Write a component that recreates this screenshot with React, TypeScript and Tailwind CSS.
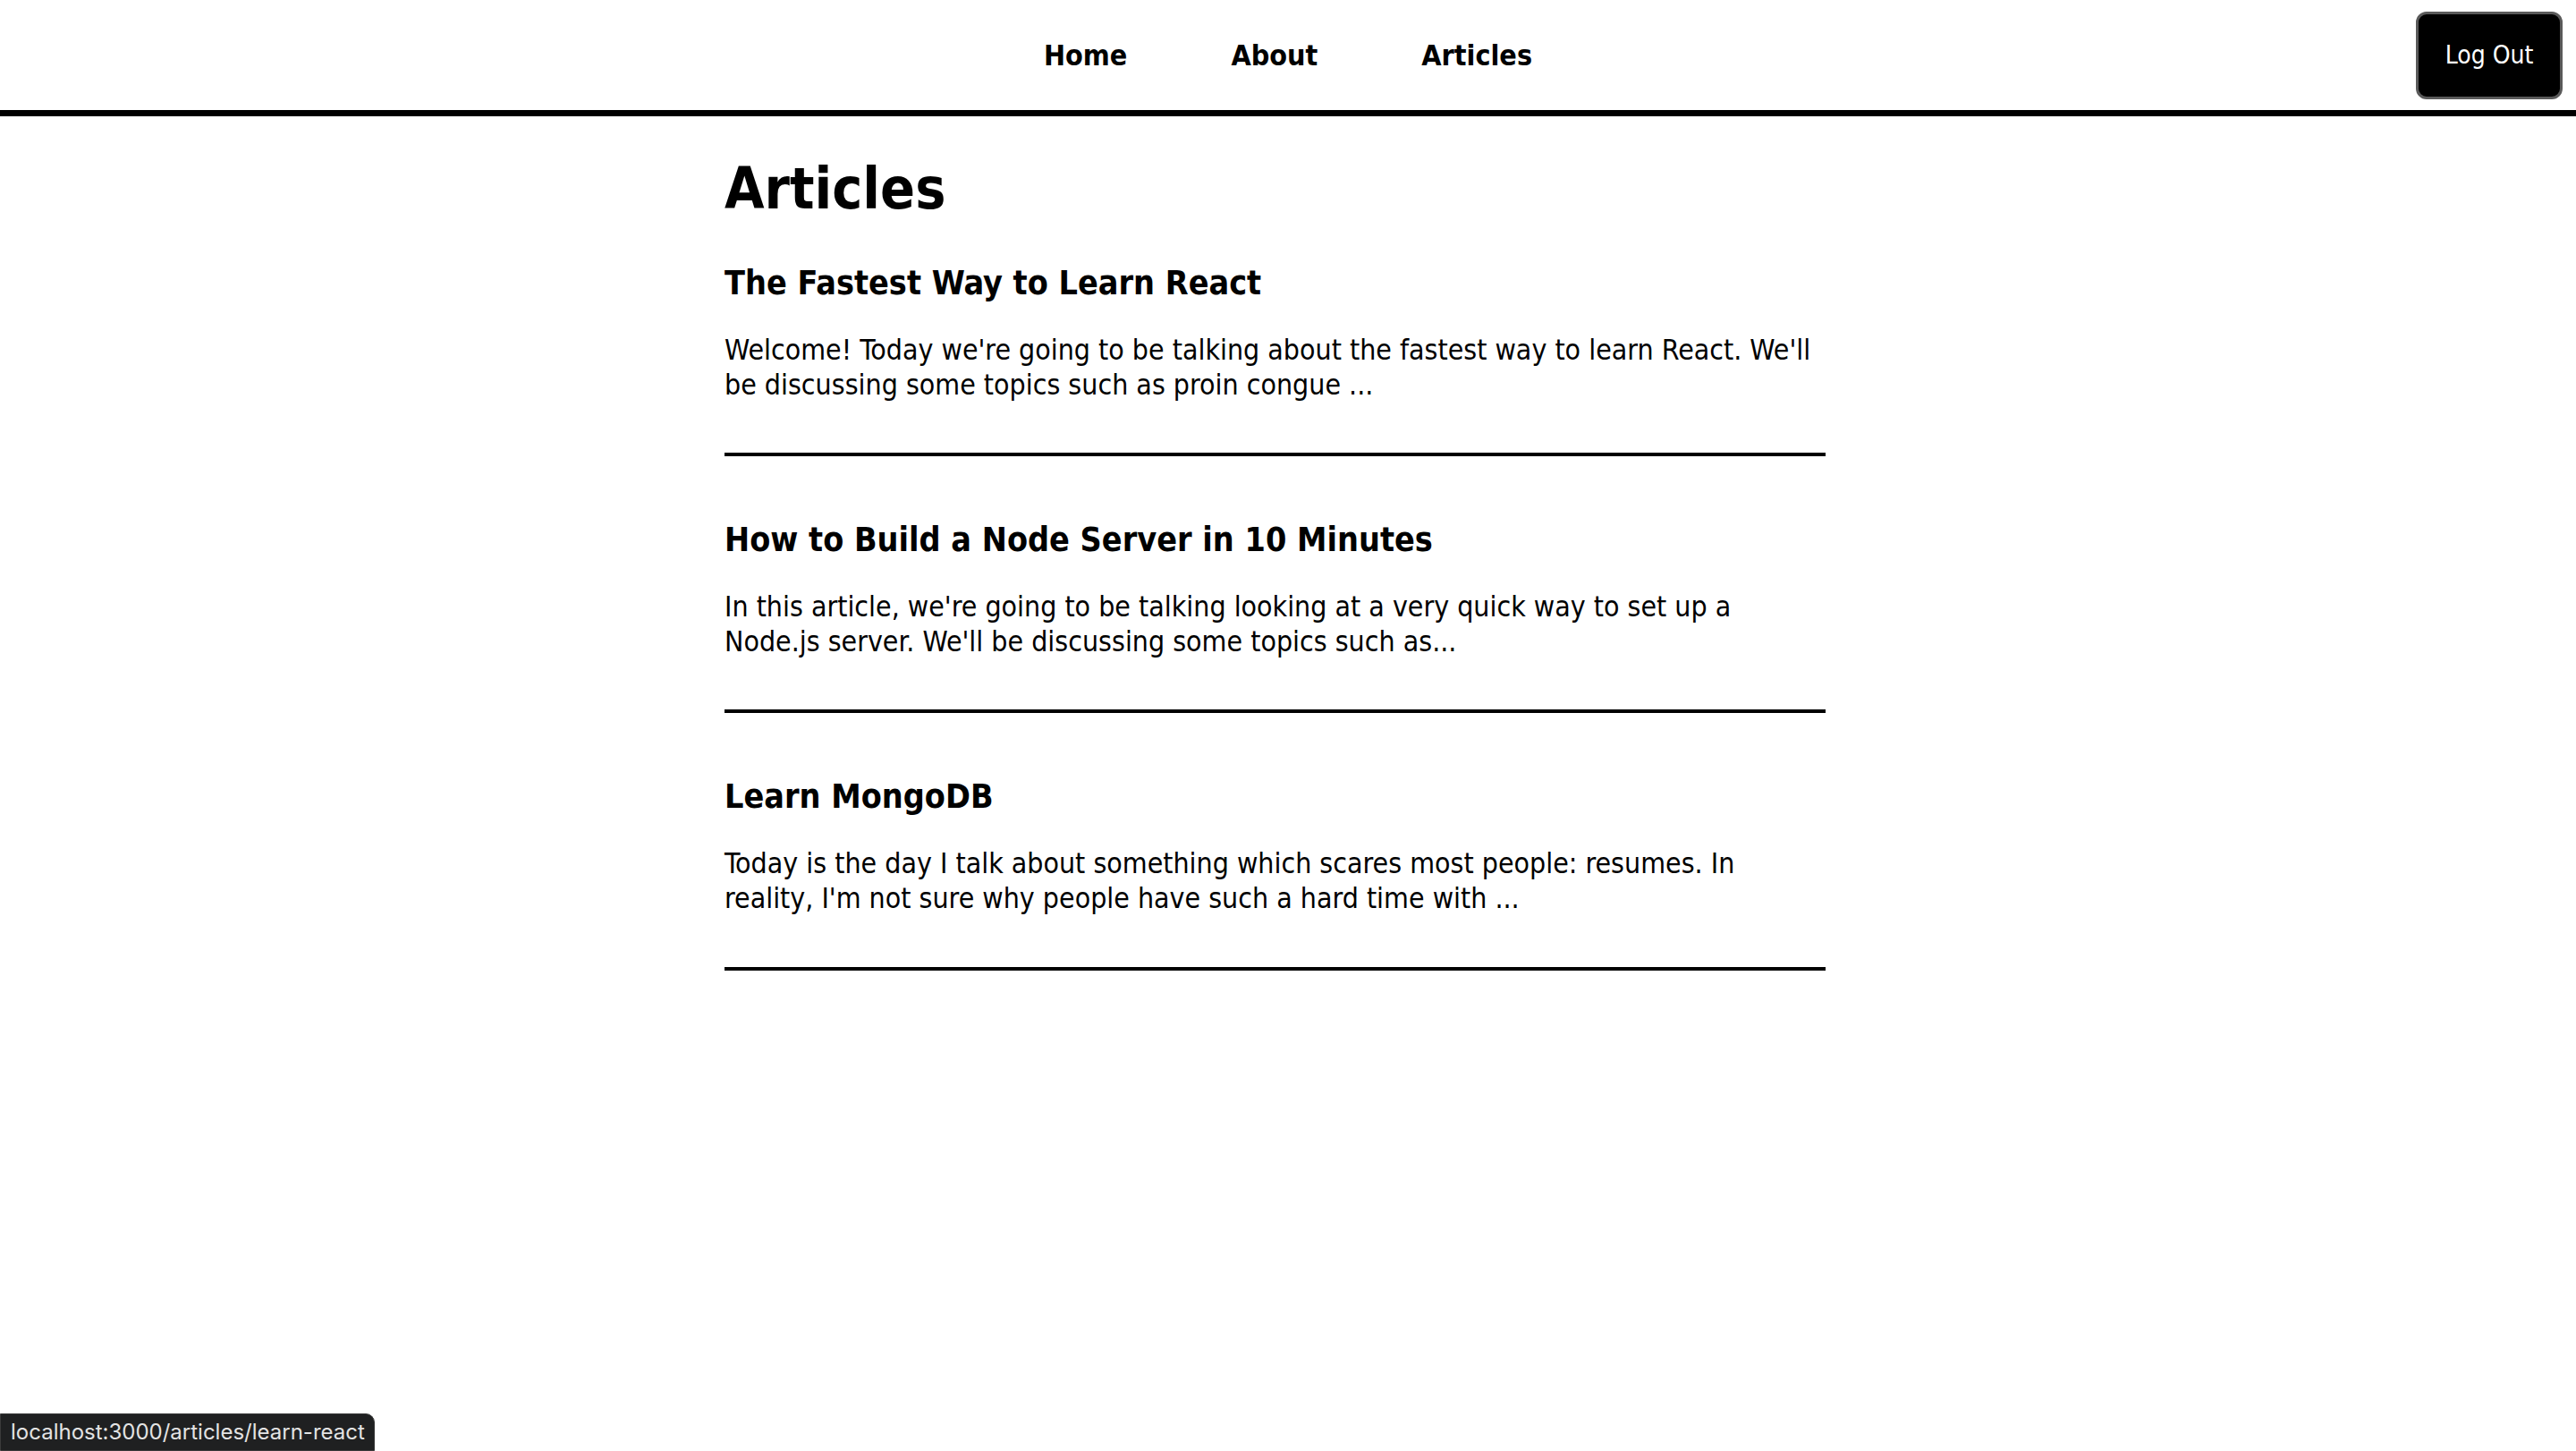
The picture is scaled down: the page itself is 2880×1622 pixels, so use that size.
import React from "react";

interface Article {
  id: number;
  title: string;
  body: string;
}

const articles: Article[] = [
  {
    id: 1,
    title: "The Fastest Way to Learn React",
    body: "Welcome! Today we're going to be talking about the fastest way to learn React. We'll be discussing some topics such as proin congue ...",
  },
  {
    id: 2,
    title: "How to Build a Node Server in 10 Minutes",
    body: "In this article, we're going to be talking looking at a very quick way to set up a Node.js server. We'll be discussing some topics such as...",
  },
  {
    id: 3,
    title: "Learn MongoDB",
    body: "Today is the day I talk about something which scares most people: resumes. In reality, I'm not sure why people have such a hard time with ...",
  },
];

const NavBar = () => {
  return (
    <nav className="grid grid-cols-[1fr_auto_1fr] items-center h-[130px] border-b-[7px] border-black box-border">
      <div />
      <ul className="flex items-center gap-[116px] text-[32px] font-bold">
        <li>Home</li>
        <li>About</li>
        <li>Articles</li>
      </ul>
      <div className="flex justify-end pr-[15px]">
        <button className="w-[164px] h-[98px] bg-black text-white text-[28px] rounded-[12px] border-[3px] border-[#5a5a5a]">
          Log Out
        </button>
      </div>
    </nav>
  );
};

const App = () => {
  return (
    <div
      className="min-h-[1622px] bg-white text-black relative"
      style={{ fontFamily: '"DejaVu Sans Condensed", "DejaVu Sans", sans-serif' }}
    >
      <NavBar />
      <main className="ml-[810px] w-[1231px] flex flex-col">
        <h1 className="text-[64px] font-bold leading-[77px] mt-[43px] mb-[44px]">Articles</h1>
        {articles.map((article) => {
          return (
            <div key={article.id} className="flex flex-col mb-[71px]">
              <h3 className="text-[37.4px] font-bold leading-[45px]">{article.title}</h3>
              <p className="text-[31.8px] leading-[38.6px] mt-[33px]">{article.body}</p>
              <div className="h-[4px] bg-black mt-[57px]" />
            </div>
          );
        })}
      </main>

      {/* browser status bubble */}
      <div className="fixed left-0 bottom-0 h-[42px] w-[419px] flex items-center pl-[11px] bg-[#1f2021] border border-[#3a3a3a] rounded-tr-[10px] text-[24px] text-[#e3e3e3] font-['Inter',sans-serif]">
        localhost:3000/articles/learn-react
      </div>
    </div>
  );
};

export default App;
